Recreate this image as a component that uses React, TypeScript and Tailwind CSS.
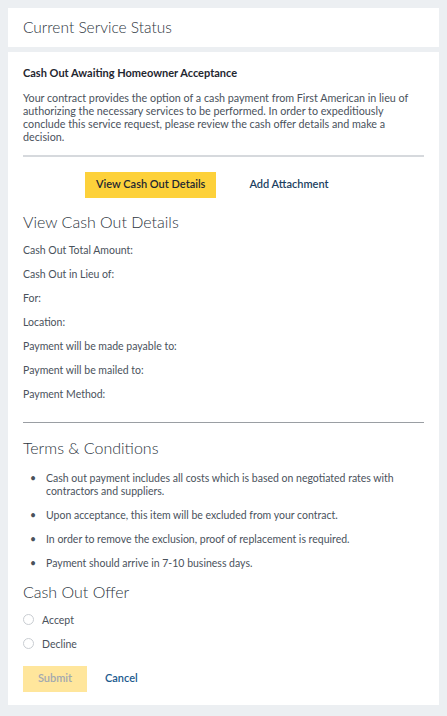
export default function App() {
  const details = [
    'Cash Out Total Amount:',
    'Cash Out in Lieu of:',
    'For:',
    'Location:',
    'Payment will be made payable to:',
    'Payment will be mailed to:',
    'Payment Method:',
  ]
  const terms = [
    'Cash out payment includes all costs which is based on negotiated rates with contractors and suppliers.',
    'Upon acceptance, this item will be excluded from your contract.',
    'In order to remove the exclusion, proof of replacement is required.',
    'Payment should arrive in 7-10 business days.',
  ]

  return (
    <main
      className="min-h-screen bg-[#eceff2] px-2 pt-2 pb-2 text-[#333a42]"
      style={{ fontFamily: 'Lato, "Open Sans", sans-serif' }}
    >
      <div className="bg-white h-[39px] px-[15px] flex items-center">
        <h1 className="text-[15.5px] font-light text-[#2d3540]">Current Service Status</h1>
      </div>

      <div className="bg-white mt-[5px] px-[15px] pt-[13px] pb-[13px]">
        <h2 className="text-[11px] font-bold text-[#1f2730]">Cash Out Awaiting Homeowner Acceptance</h2>
        <p className="mt-[9px] text-[10.75px] leading-[13px] text-[#4a525c]">
          Your contract provides the option of a cash payment from First American in lieu of authorizing the
          necessary services to be performed. In order to expeditiously conclude this service request, please
          review the cash offer details and make a decision.
        </p>
        <div className="mt-[12px] h-[2px] bg-[#d6d9dd]" />

        <div className="mt-[15px] pl-[62px] flex items-center gap-[33px]">
          <button className="bg-[#fdd13a] h-[26px] px-[11px] text-[11px] font-semibold text-[#1f2730]">
            View Cash Out Details
          </button>
          <button className="text-[11px] font-semibold text-[#1c3f61]">Add Attachment</button>
        </div>

        <h3 className="mt-[12px] text-[16px] font-light text-[#2d3540]">View Cash Out Details</h3>
        <div className="mt-[9px] flex flex-col gap-[10px]">
          {details.map((d) => (
            <p key={d} className="text-[10.5px] leading-[14px] text-[#4a525c]">{d}</p>
          ))}
        </div>

        <div className="mt-[21px] h-px bg-[#9a9ea3]" />

        <h3 className="mt-[13px] text-[16px] font-light text-[#2d3540]">Terms &amp; Conditions</h3>
        <ul className="mt-[12px] flex flex-col gap-[11px]">
          {terms.map((t) => (
            <li key={t} className="flex text-[10.5px] leading-[13px] text-[#4a525c]">
              <span className="w-[23px] pl-[7px] shrink-0">•</span>
              <span>{t}</span>
            </li>
          ))}
        </ul>

        <h3 className="mt-[10px] text-[16px] font-light text-[#2d3540]">Cash Out Offer</h3>
        <div className="mt-[9px] flex flex-col gap-[10px]">
          {['Accept', 'Decline'].map((o) => (
            <label key={o} className="flex items-center gap-[8px] text-[10.5px] leading-[14px] text-[#4a525c]">
              <span className="w-[11px] h-[11px] rounded-full border border-[#c9cdd2] bg-white" />
              {o}
            </label>
          ))}
        </div>

        <div className="mt-[15px] flex items-center gap-[18px]">
          <button className="bg-[#ffe69c] h-[26px] w-[64px] text-[11px] font-semibold text-[#a3a9b0]">Submit</button>
          <button className="text-[11px] font-semibold text-[#1a5a8e]">Cancel</button>
        </div>
      </div>
    </main>
  )
}
